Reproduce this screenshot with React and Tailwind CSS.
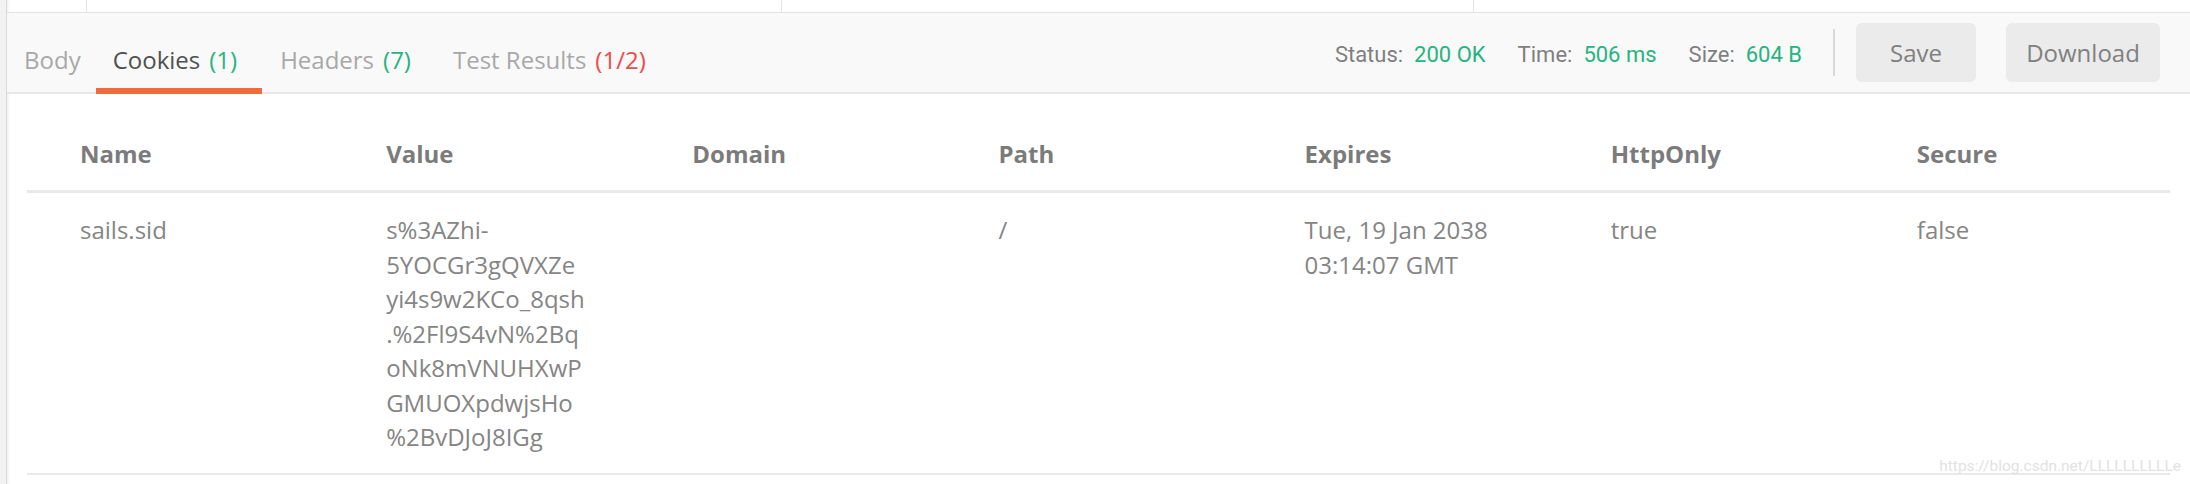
import React from 'react';

const tabs = [
  { label: 'Body', count: null, active: false, pl: 'pl-[17px]', pr: 'pr-[15px]' },
  { label: 'Cookies', count: '(1)', tone: 'text-[#26b47f]', active: true, pl: 'pl-[17px]', pr: 'pr-[25px]' },
  { label: 'Headers', count: '(7)', tone: 'text-[#26b47f]', active: false, pl: 'pl-[18px]', pr: 'pr-[24px]' },
  { label: 'Test Results', count: '(1/2)', tone: 'text-[#ed4b48]', active: false, pl: 'pl-[18px]', pr: 'pr-[20px]' },
];

const stats = [
  { label: 'Status:', value: '200 OK' },
  { label: 'Time:', value: '506 ms' },
  { label: 'Size:', value: '604 B' },
];

const columns = ['Name', 'Value', 'Domain', 'Path', 'Expires', 'HttpOnly', 'Secure'];

// one cookie, value wrapped the way the app shows it
const cookie = {
  name: 'sails.sid',
  value: [
    's%3AZhi-',
    '5YOCGr3gQVXZe',
    'yi4s9w2KCo_8qsh',
    '.%2Fl9S4vN%2Bq',
    'oNk8mVNUHXwP',
    'GMUOXpdwjsHo',
    '%2BvDJoJ8IGg',
  ],
  domain: '',
  path: '/',
  expires: ['Tue, 19 Jan 2038', '03:14:07 GMT'],
  httpOnly: 'true',
  secure: 'false',
};

function Lines({ items }) {
  return items.map((line, i) => (
    <span key={i} className="block whitespace-nowrap">
      {line}
    </span>
  ));
}

export default function App() {
  return (
    <div className="relative flex w-[2190px] h-[484px] overflow-hidden bg-white font-['Open_Sans',sans-serif]">
      {/* left edge of the window pane */}
      <div className="w-[7px] shrink-0 bg-[#f2f2f2] border-r border-[#dadada]" />

      <div className="flex-1 flex flex-col min-w-0 shadow-[inset_3px_0_3px_-2px_rgba(0,0,0,0.08)]">
        {/* bit of the request panel above */}
        <div className="flex h-[13px] border-b border-[#e4e4e4]">
          <div className="w-[80px] border-r border-[#e6e6e6]" />
          <div className="w-[695px] border-r border-[#e6e6e6]" />
          <div className="w-[692px] border-r border-[#e6e6e6]" />
          <div className="flex-1" />
        </div>

        {/* tab bar */}
        <div className="flex items-stretch h-[81px] bg-[#f9f9f9] border-b-2 border-[#e7e7e7]">
          <div className="flex items-stretch">
            {tabs.map((t) => (
              <div key={t.label} className={`flex flex-col justify-end -mb-[2px] ${t.pl} ${t.pr}`}>
                <span
                  className={`text-[24px] leading-[34px] whitespace-nowrap ${
                    t.active ? 'text-[#505050]' : 'text-[#a8a8a8]'
                  }`}
                >
                  {t.label}
                  {t.count && <span className={`ml-[9px] ${t.tone}`}>{t.count}</span>}
                </span>
                <div className="h-[11px]" />
                <div className={`h-[6px] -mx-[17px] ${t.active ? 'bg-[#f26b3a] mr-[-25px]' : ''}`} />
              </div>
            ))}
          </div>

          <div className="ml-auto flex items-center pr-[30px]">
            <div className="flex items-center gap-[32px] mt-[5px] font-['Roboto',sans-serif] text-[22px] leading-[34px]">
              {stats.map((s) => (
                <span key={s.label} className="whitespace-nowrap">
                  <span className="text-[#7f7f7f]">{s.label}</span>
                  <span className="ml-[11px] text-[#26b47f]">{s.value}</span>
                </span>
              ))}
            </div>
            <div className="ml-[31px] w-[2px] h-[47px] bg-[#d9d9d9]" />
            <button className="ml-[21px] w-[120px] h-[59px] rounded-[6px] bg-[#ebebeb] text-[24px] text-[#808080]">
              Save
            </button>
            <button className="ml-[30px] w-[154px] h-[59px] rounded-[6px] bg-[#ebebeb] text-[24px] text-[#808080]">
              Download
            </button>
          </div>
        </div>

        {/* cookies table */}
        <div className="mx-[20px] mt-[24px]">
          <div className="grid grid-cols-7 border-b-[3px] border-[#e9e9e9]">
            {columns.map((c) => (
              <div
                key={c}
                className="pl-[53px] pt-[19px] pb-[19px] text-[24px] leading-[34px] font-bold text-[#7b7b7b]"
              >
                {c}
              </div>
            ))}
          </div>
          <div className="grid grid-cols-7 pt-[20px] pb-[18px] border-b-2 border-[#e9e9e9] text-[24px] leading-[34.5px] text-[#858585]">
            <div className="pl-[53px]">{cookie.name}</div>
            <div className="pl-[53px]">
              <Lines items={cookie.value} />
            </div>
            <div className="pl-[53px]">{cookie.domain}</div>
            <div className="pl-[53px]">{cookie.path}</div>
            <div className="pl-[53px]">
              <Lines items={cookie.expires} />
            </div>
            <div className="pl-[53px]">{cookie.httpOnly}</div>
            <div className="pl-[53px]">{cookie.secure}</div>
          </div>
        </div>
      </div>

      {/* blog watermark stamped over the screenshot */}
      <span className="absolute right-[9px] bottom-[10px] font-['Roboto',sans-serif] text-[15.5px] leading-[16px] text-[#e2e2e2]">
        https://blog.csdn.net/LLLLLLLLLLe
      </span>
    </div>
  );
}
